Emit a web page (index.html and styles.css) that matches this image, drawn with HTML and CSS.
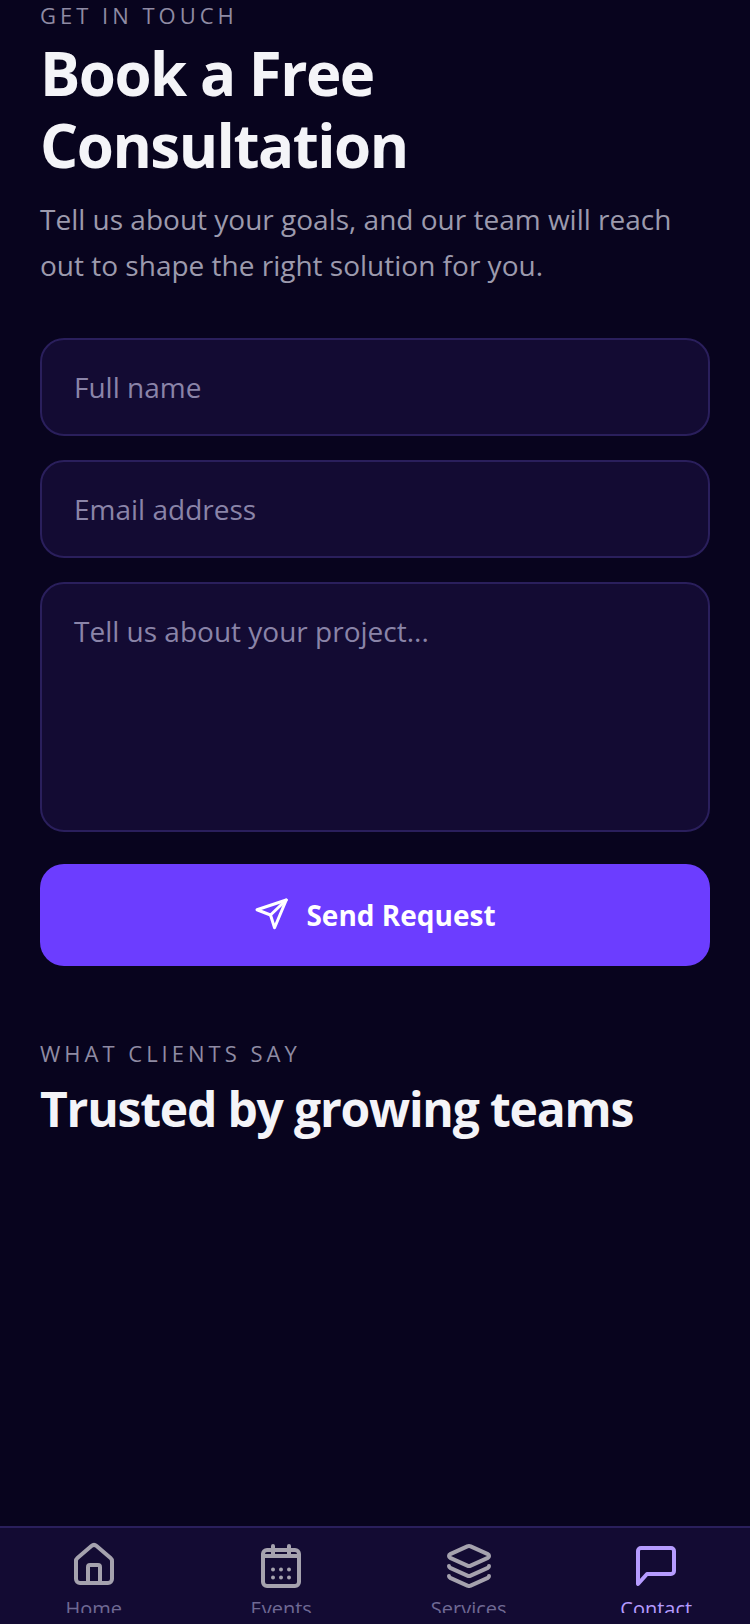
FILE: index.html
```html
<!DOCTYPE html>
<html lang="en">
<head>
    <meta charset="UTF-8">
    <meta name="viewport" content="width=device-width, initial-scale=1.0">
    <title>Contact</title>
    <link rel="stylesheet" href="styles.css">
</head>
<body>

    <main class="content">
        <p class="eyebrow">GET IN TOUCH</p>
        <h1 class="title">Book a Free<br>Consultation</h1>
        <p class="lead">Tell us about your goals, and our team will reach out to shape the right solution for you.</p>

        <form class="form">
            <input class="field" type="text" placeholder="Full name">
            <input class="field" type="email" placeholder="Email address">
            <textarea class="field field-area" placeholder="Tell us about your project..."></textarea>
            <button class="send" type="button">
                <svg class="send-icon" viewBox="0 0 24 24" fill="none" stroke="currentColor" stroke-width="2" stroke-linecap="round" stroke-linejoin="round">
                    <path d="M21.500 2 2 8.500l9 3.500 2.700 8.500z"/>
                    <path d="M21.500 2 11 12"/>
                </svg>
                Send Request
            </button>
        </form>

        <p class="eyebrow eyebrow-second">WHAT CLIENTS SAY</p>
        <h2 class="title title-small">Trusted by growing teams</h2>
    </main>

    <nav class="tabbar">
        <div class="tabs">
            <a class="tab">
                <svg class="tab-icon" viewBox="0 0 24 24" fill="none" stroke="currentColor" stroke-width="2" stroke-linecap="round" stroke-linejoin="round">
                    <g transform="translate(0 .5)">
                        <path d="M15 21v-8a1 1 0 0 0-1-1h-4a1 1 0 0 0-1 1v8"/>
                        <path d="M3 10a2 2 0 0 1 .709-1.528l7-5.999a2 2 0 0 1 2.582 0l7 5.999A2 2 0 0 1 21 10v9a2 2 0 0 1-2 2H5a2 2 0 0 1-2-2z"/>
                    </g>
                </svg>
                <span>Home</span>
            </a>
            <a class="tab">
                <svg class="tab-icon" viewBox="0 0 24 24" fill="none" stroke="currentColor" stroke-width="2" stroke-linecap="round" stroke-linejoin="round">
                    <path d="M8 3v4M16 3v4"/>
                    <rect x="3" y="5" width="18" height="18" rx="2"/>
                    <path d="M3 8h18"/>
                    <g fill="currentColor" stroke="none">
                        <circle cx="8" cy="14.700" r="1"/>
                        <circle cx="12" cy="14.700" r="1"/>
                        <circle cx="16" cy="14.700" r="1"/>
                        <circle cx="8" cy="18.800" r="1"/>
                        <circle cx="12" cy="18.800" r="1"/>
                        <circle cx="16" cy="18.800" r="1"/>
                    </g>
                </svg>
                <span>Events</span>
            </a>
            <a class="tab">
                <svg class="tab-icon" viewBox="0 0 24 24" fill="none" stroke="currentColor" stroke-width="2" stroke-linecap="round" stroke-linejoin="round">
                    <g transform="translate(0 1)">
                        <path d="M12.830 2.180a2 2 0 0 0-1.660 0L2.600 6.080a1 1 0 0 0 0 1.830l8.580 3.910a2 2 0 0 0 1.660 0l8.580-3.900a1 1 0 0 0 0-1.830z"/>
                        <path d="M2 12a1 1 0 0 0 .58.91l8.600 3.910a2 2 0 0 0 1.650 0l8.580-3.900A1 1 0 0 0 22 12"/>
                        <path d="M2 17a1 1 0 0 0 .58.91l8.600 3.910a2 2 0 0 0 1.650 0l8.580-3.900A1 1 0 0 0 22 17"/>
                    </g>
                </svg>
                <span>Services</span>
            </a>
            <a class="tab tab-active">
                <svg class="tab-icon" viewBox="0 0 24 24" fill="none" stroke="currentColor" stroke-width="2" stroke-linecap="round" stroke-linejoin="round">
                    <path d="M21 15.500a1.500 1.500 0 0 1-1.500 1.500H7.500L3 22V5.500A1.500 1.500 0 0 1 4.500 4h15A1.500 1.500 0 0 1 21 5.500z"/>
                </svg>
                <span>Contact</span>
            </a>
        </div>
    </nav>

</body>
</html>
```

FILE: styles.css
```css
* {
    margin: 0;
    padding: 0;
    box-sizing: border-box;
    font-family: "Open Sans", sans-serif;
}

body {
    background: #08041e;
    display: flex;
    flex-direction: column;
    height: 100vh;
    overflow: hidden;
}

.content {
    flex: 1;
    padding: 1px 40px 0;
}

.eyebrow {
    color: #8f8ba3;
    font-size: 22px;
    line-height: 28px;
    letter-spacing: 4px;
}

.eyebrow-second {
    margin-top: 73px;
}

.title {
    color: #f4f4f8;
    font-size: 60px;
    font-weight: 700;
    line-height: 72px;
    letter-spacing: -1.5px;
    margin-top: 8px;
}

.title-small {
    font-size: 48px;
    letter-spacing: -1.2px;
    margin-top: 6px;
}

.lead {
    color: #9c9aad;
    font-size: 28px;
    line-height: 46px;
    margin-top: 15px;
}

.form {
    display: flex;
    flex-direction: column;
    gap: 24px;
    margin-top: 50px;
}

.field {
    background: #130b33;
    border: 2px solid #2a1f5c;
    border-radius: 24px;
    color: #f4f4f8;
    display: block;
    font-size: 28px;
    height: 98px;
    padding: 0 32px;
    width: 100%;
}

.field::placeholder {
    color: #8a84a8;
    opacity: 1;
}

.field-area {
    height: 250px;
    line-height: 38px;
    padding: 28px 32px;
    resize: none;
}

.send {
    align-items: center;
    background: #6c3dff;
    border: none;
    border-radius: 24px;
    color: #fff;
    display: flex;
    font-size: 28px;
    font-weight: 700;
    gap: 16px;
    height: 102px;
    justify-content: center;
    margin-top: 8px;
}

.send-icon {
    flex-shrink: 0;
    height: 36px;
    width: 36px;
}

.tabbar {
    background: #130b33;
    border-top: 2px solid #2a1f5c;
    height: 98px;
}

.tabs {
    display: flex;
    height: 85px;
    overflow: hidden;
}

.tab {
    align-items: center;
    color: #6f6994;
    display: flex;
    flex: 1;
    flex-direction: column;
    font-size: 20px;
    line-height: 28px;
    padding-top: 12px;
}

.tab-icon {
    color: #a5a2ae;
    flex-shrink: 0;
    height: 48px;
    margin-bottom: 7px;
    width: 48px;
}

.tab-active,
.tab-active .tab-icon {
    color: #b69cff;
}
```
